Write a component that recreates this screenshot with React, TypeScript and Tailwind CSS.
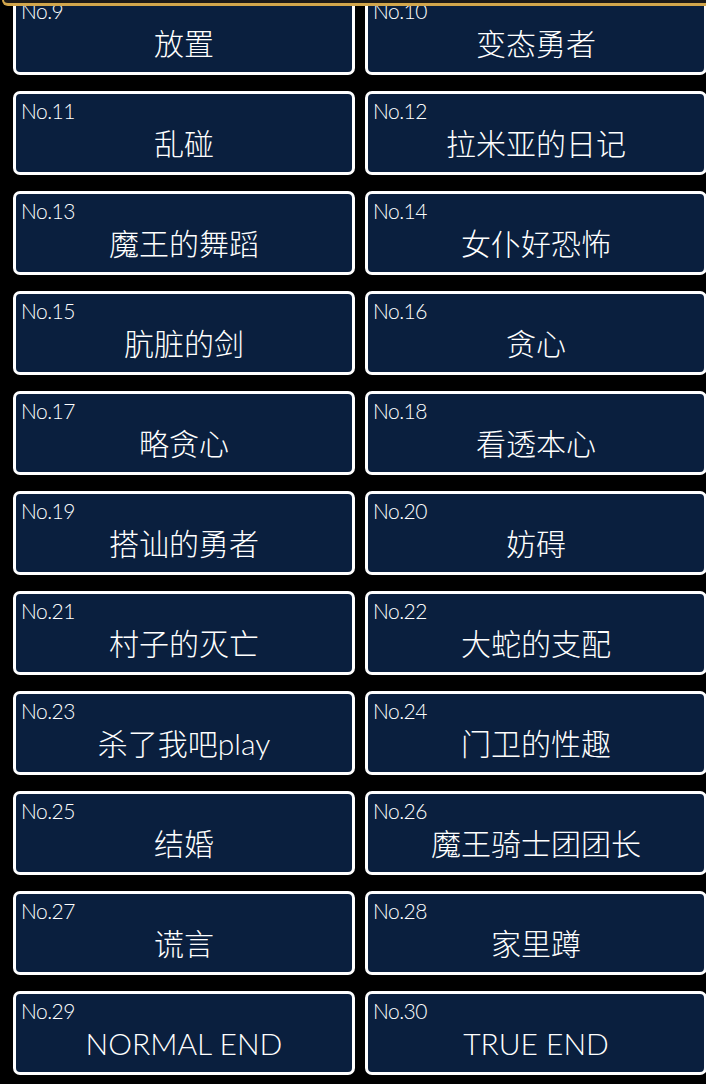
import React from "react";

type Ending = { no: number; title: string };

const endings: Ending[] = [
  { no: 9, title: "放置" },
  { no: 10, title: "变态勇者" },
  { no: 11, title: "乱碰" },
  { no: 12, title: "拉米亚的日记" },
  { no: 13, title: "魔王的舞蹈" },
  { no: 14, title: "女仆好恐怖" },
  { no: 15, title: "肮脏的剑" },
  { no: 16, title: "贪心" },
  { no: 17, title: "略贪心" },
  { no: 18, title: "看透本心" },
  { no: 19, title: "搭讪的勇者" },
  { no: 20, title: "妨碍" },
  { no: 21, title: "村子的灭亡" },
  { no: 22, title: "大蛇的支配" },
  { no: 23, title: "杀了我吧play" },
  { no: 24, title: "门卫的性趣" },
  { no: 25, title: "结婚" },
  { no: 26, title: "魔王骑士团团长" },
  { no: 27, title: "谎言" },
  { no: 28, title: "家里蹲" },
  { no: 29, title: "NORMAL END" },
  { no: 30, title: "TRUE END" },
];

function EndingCard({ ending }: { ending: Ending }) {
  return (
    <div className="h-[84px] rounded-[7px] border-[3px] border-white bg-[#0a1f3e] px-[5px] pt-[5px] flex flex-col">
      <span className="text-[21px] leading-[24px] font-light tracking-tight text-white">
        No.{ending.no}
      </span>
      <span className="mt-[2px] text-center text-[30px] leading-[36px] font-light text-white">
        {ending.title}
      </span>
    </div>
  );
}

export default function App() {
  return (
    <div
      className="relative h-[1084px] w-[706px] overflow-hidden bg-black"
      style={{ fontFamily: '"Lato", "Noto Sans CJK SC", sans-serif' }}
    >
      <div className="-mt-[9px] pl-[13px] grid grid-cols-[342px_342px] gap-x-[10px] gap-y-[16px]">
        {endings.map((e) => (
          <EndingCard key={e.no} ending={e} />
        ))}
      </div>
      {/* header panel edge overlapping the list */}
      <div className="absolute top-0 left-[2px] right-0 h-[6px] rounded-bl-[6px] border-b-[3px] border-l-[2px] border-[#d2a64c] bg-[#1c1a18]" />
    </div>
  );
}
